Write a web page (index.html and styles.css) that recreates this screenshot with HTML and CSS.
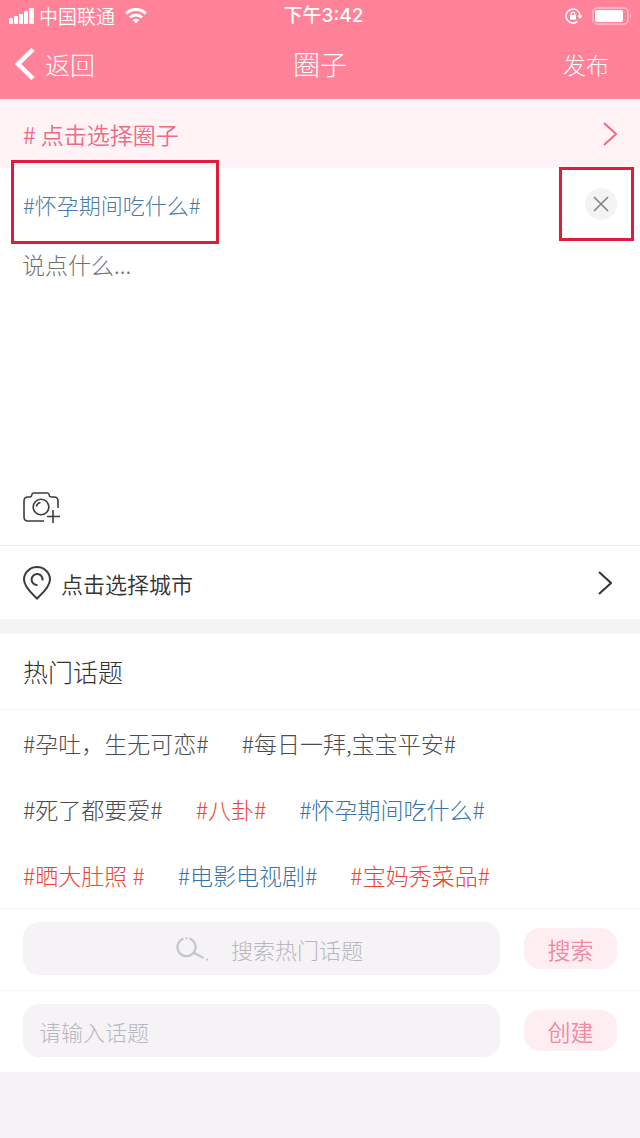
FILE: index.html
```html
<!DOCTYPE html>
<html lang="zh-CN">
<head>
  <meta charset="UTF-8">
  <meta name="viewport" content="width=device-width, initial-scale=1.0">
  <title>圈子</title>
  <link rel="stylesheet" href="styles.css">
</head>
<body>

  <header class="header">
    <div class="status-bar">
      <div class="status-left">
        <svg width="26" height="16" viewBox="0 0 26 16" fill="#fff" aria-hidden="true">
          <rect x="0" y="10" width="4" height="6" rx="1"/>
          <rect x="5" y="8" width="4" height="8" rx="1"/>
          <rect x="10" y="6" width="4" height="10" rx="1"/>
          <rect x="15" y="3" width="4" height="13" rx="1"/>
          <rect x="20" y="0" width="5" height="16" rx="1"/>
        </svg>
        <span class="carrier">中国联通</span>
        <svg class="wifi" width="22" height="16" viewBox="0 0 22 16" fill="none" stroke="#fff" stroke-width="3" aria-hidden="true">
          <path d="M1.2 5.6C6.8 .2 15.2 .2 20.8 5.6"/>
          <path d="M5 9.5C8.5 6.2 13.5 6.2 17 9.5"/>
          <path d="M7.8 12Q11 9.5 14.2 12L11 15.5Z" fill="#fff" stroke="none"/>
        </svg>
      </div>
      <span class="time">下午3:42</span>
      <div class="status-right">
        <svg width="18" height="16" viewBox="0 0 18 16" fill="none" stroke="#fff" stroke-width="1.5" aria-hidden="true">
          <path d="M12.5 13.4A7 7 0 1 1 15 8"/>
          <path d="M12.3 7.500h5.4L15 11Z" fill="#fff" stroke="none"/>
          <rect x="5" y="7" width="6" height="4.5" fill="#fff" stroke="none"/>
          <path d="M6.2 7.500V6a1.800 1.800 0 0 1 3.600 0v1.500" stroke-width="1.2"/>
        </svg>
        <svg width="40" height="18" viewBox="0 0 40 18" fill="none" aria-hidden="true">
          <rect x="1" y="1" width="35" height="16" rx="4" stroke="#ffc0cb" stroke-width="1.5"/>
          <rect x="3" y="3" width="28" height="12" rx="2" fill="#fff"/>
          <path d="M38 6.500q2.500 2.500 0 5z" fill="#ffc0cb"/>
        </svg>
      </div>
    </div>
    <nav class="nav">
      <button type="button" class="nav-back">
        <svg width="20" height="32" viewBox="0 0 20 32" fill="none" stroke="#fff" stroke-width="4.5" aria-hidden="true"><path d="M18 1.500L3 16l15 14.500"/></svg>
        返回
      </button>
      <h1 class="nav-title">圈子</h1>
      <button type="button" class="nav-publish">发布</button>
    </nav>
  </header>

  <main>
    <a href="#" class="circle-row">
      <span># 点击选择圈子</span>
      <svg width="14" height="24" viewBox="0 0 14 24" fill="none" stroke="#ee6a85" stroke-width="2" aria-hidden="true"><path d="M1 1l12 11L1 23"/></svg>
    </a>

    <section class="composer">
      <div class="selected-row">
        <span class="selected-topic marked">#怀孕期间吃什么#</span>
        <button type="button" class="remove-topic marked" aria-label="删除话题">
          <svg width="16" height="16" viewBox="0 0 16 16" fill="none" stroke="#808080" stroke-width="1.5"><path d="M1 1l14 14M15 1L1 15"/></svg>
        </button>
      </div>
      <textarea class="post-text" placeholder="说点什么..." aria-label="说点什么"></textarea>
      <button type="button" class="add-photo" aria-label="添加照片">
        <svg width="37" height="31" viewBox="0 0 37 31" fill="none" stroke="#3c3c3e" stroke-width="1.6">
          <path d="M21 29H5q-4 0-4-4V9q0-4 4-4h1.500q2 0 2.300-2Q9 1 10.500 1h14q1.500 0 1.700 2q.3 2 2.300 2H31q4 0 4 4v7"/>
          <circle cx="18" cy="15" r="7.800"/>
          <path d="M13.500 14.500q.5-3.500 4-4"/>
          <path d="M30 18v13M24 24.500h13"/>
        </svg>
      </button>
    </section>

    <a href="#" class="city-row">
      <svg width="28" height="34" viewBox="0 0 28 34" fill="none" stroke="#3c3c3e" stroke-width="2" aria-hidden="true">
        <path d="M14 32.500C11 29.500 1 21.500 1 13.500a13 12.500 0 0 1 26 0C27 21.500 17 29.500 14 32.500Z"/>
        <path d="M14.500 19A5.500 5.500 0 1 1 19.500 14.500"/>
      </svg>
      <span class="city-label">点击选择城市</span>
      <svg width="14" height="24" viewBox="0 0 14 24" fill="none" stroke="#333" stroke-width="2" aria-hidden="true"><path d="M1 1l12 11L1 23"/></svg>
    </a>

    <section class="hot">
      <h2 class="hot-title">热门话题</h2>
      <div class="topics">
        <div class="topic-line">
          <a href="#" class="topic">#孕吐，生无可恋#</a>
          <a href="#" class="topic">#每日一拜,宝宝平安#</a>
        </div>
        <div class="topic-line">
          <a href="#" class="topic">#死了都要爱#</a>
          <a href="#" class="topic red">#八卦#</a>
          <a href="#" class="topic blue">#怀孕期间吃什么#</a>
        </div>
        <div class="topic-line">
          <a href="#" class="topic red">#晒大肚照 #</a>
          <a href="#" class="topic blue">#电影电视剧#</a>
          <a href="#" class="topic red">#宝妈秀菜品#</a>
        </div>
      </div>
      <form class="form-row">
        <label class="field search-field">
          <svg width="32" height="24" viewBox="0 0 32 24" fill="none" stroke="#c8c8ca" stroke-width="2.4" aria-hidden="true">
            <path d="M7.500 1.600A9 9 0 1 0 13.500 1.600"/>
            <path d="M17.500 15.500l10 5.500"/>
            <path d="M9.500 1.200h2" stroke-width="2"/>
            <path d="M30 22.500h2" stroke-width="2"/>
          </svg>
          <input type="text" placeholder="搜索热门话题" aria-label="搜索热门话题">
        </label>
        <button type="button" class="pill">搜索</button>
      </form>
      <form class="form-row">
        <label class="field">
          <input type="text" placeholder="请输入话题" aria-label="请输入话题">
        </label>
        <button type="button" class="pill">创建</button>
      </form>
    </section>
  </main>

</body>
</html>
```
FILE: styles.css
```css
* {
  box-sizing: border-box;
}
body {
  margin: 0;
  min-height: 100vh;
  background-color: #f5f3f5;
  color: #333;
  font-family: "Noto Sans CJK SC", sans-serif;
  font-size: 23px;
  font-weight: 300;
  line-height: 32px;
}
a {
  color: inherit;
  text-decoration: none;
}
button, input, textarea {
  margin: 0;
  padding: 0;
  border: none;
  background: none;
  color: inherit;
  font: inherit;
}
button {
  cursor: pointer;
}
svg {
  display: block;
  flex: none;
}

/* header */
.header {
  background-color: #ff8298;
  color: #fff;
}
.status-bar, .nav {
  display: grid;
  grid-template-columns: 1fr auto 1fr;
  align-items: center;
}
.status-bar {
  height: 32px;
  padding: 0 8px 0 9px;
  font-size: 19px;
  font-weight: 350;
}
.status-left, .status-right {
  display: flex;
  align-items: center;
  gap: 4px;
}
.status-right {
  justify-content: flex-end;
  gap: 9px;
}
.wifi {
  margin-left: 6px;
}
.time {
  padding-left: 6px;
  font-family: Inter, "Noto Sans CJK SC", sans-serif;
  font-weight: 500;
}
.nav {
  height: 67px;
  padding: 0 31px 4px 15px;
}
.nav-back {
  display: flex;
  align-items: center;
  gap: 10px;
  justify-self: start;
  font-size: 25px;
}
.nav-title {
  margin: 0;
  padding-left: 16px;
  font-size: 27px;
  font-weight: 300;
}
.nav-publish {
  justify-self: end;
}

/* composer */
.circle-row {
  display: flex;
  align-items: center;
  justify-content: space-between;
  height: 69px;
  padding: 0 23px;
  background-color: #fff3f5;
  color: #ee6a85;
  font-weight: 350;
}
.composer {
  background-color: #fff;
  padding-bottom: 22px;
  border-bottom: 1px solid #f0f0f0;
}
.selected-row {
  display: flex;
  align-items: center;
  justify-content: space-between;
  padding: 0 23px;
}
.selected-topic {
  color: #4a7ba6;
  font-size: 22px;
  line-height: 72px;
}
.remove-topic {
  display: flex;
  align-items: center;
  justify-content: center;
  width: 32px;
  height: 32px;
  border-radius: 50%;
  background-color: #f3f3f3;
}
.marked {
  position: relative;
}
.marked::after {
  content: "";
  position: absolute;
  border: 3px solid #e01b3c;
  pointer-events: none;
}
.selected-topic::after {
  inset: -8px -18px -4px -12px;
}
.remove-topic::after {
  inset: -21px -17px -21px -26px;
}
.post-text {
  display: block;
  width: 100%;
  height: 252px;
  padding: 8px 22px;
  outline: none;
  resize: none;
}
.post-text::placeholder {
  color: #707070;
}
.add-photo {
  display: block;
  margin-left: 23px;
}
.city-row {
  display: flex;
  align-items: center;
  gap: 10px;
  height: 73px;
  padding: 0 28px 0 23px;
  background-color: #fff;
  font-size: 22px;
  font-weight: 350;
}
.city-label {
  flex: 1;
}

/* hot topics */
.hot {
  margin-top: 15px;
  background-color: #fff;
}
.hot-title {
  margin: 0;
  padding: 0 23px;
  border-bottom: 1px solid #f3f3f3;
  font-size: 25px;
  font-weight: 300;
  line-height: 75px;
}
.topics {
  display: flex;
  flex-direction: column;
  gap: 34px;
  padding: 17px 23px;
}
.topic-line {
  display: flex;
  flex-wrap: wrap;
  gap: 33px;
}
.topic {
  color: #4c4c4c;
  white-space: pre;
}
.red {
  color: #f0432e;
}
.blue {
  color: #3a74a8;
}
.form-row {
  display: flex;
  align-items: center;
  gap: 24px;
  padding: 13px 23px 15px;
  border-top: 1px solid #f5f5f5;
}
.field {
  display: flex;
  flex: 1;
  align-items: center;
  gap: 23px;
  height: 53px;
  padding: 0 16px;
  border-radius: 16px;
  background-color: #f5f3f5;
  font-size: 22px;
}
.search-field {
  padding-left: 153px;
}
.field input {
  flex: 1;
  min-width: 0;
  outline: none;
}
.field input::placeholder {
  color: #b8b7c0;
}
.pill {
  width: 93px;
  height: 41px;
  border-radius: 16px;
  background-color: #ffeef1;
  color: #f08aa0;
  font-weight: 350;
}
```
